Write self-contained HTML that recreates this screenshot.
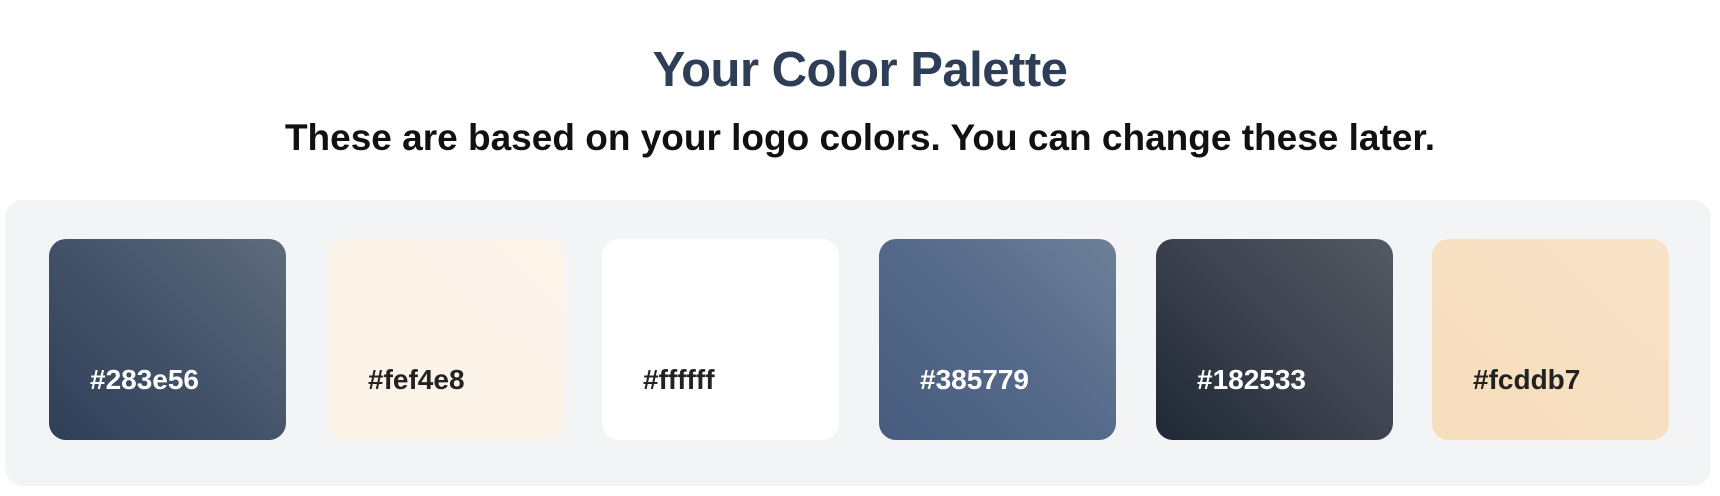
<!DOCTYPE html>
<html><head><meta charset="utf-8"><style>
html,body{margin:0;padding:0;background:#fff;width:1720px;height:496px;overflow:hidden;font-family:"Liberation Sans",sans-serif}
h1{position:absolute;left:0;width:1720px;top:41px;margin:0;text-align:center;font-size:49px;font-weight:bold;color:#2d3e56;line-height:58px;letter-spacing:-0.5px}
h2{position:absolute;left:0;width:1720px;top:115px;margin:0;text-align:center;font-size:37px;font-weight:bold;color:#111;line-height:46px}
.panel{position:absolute;left:5px;top:200px;width:1706px;height:286px;background:#f3f4f6;border-radius:18px}
.sw{position:absolute;top:239px;width:237px;height:201px;border-radius:17px}
.sw span{position:absolute;left:41px;top:124px;font-size:28px;line-height:34px;font-weight:bold}
</style></head><body>
<h1>Your Color Palette</h1>
<h2>These are based on your logo colors. You can change these later.</h2>
<div class="panel"></div>
<div class="sw" style="left:49px;background:linear-gradient(225deg,#5f6b7c,#44536a 50%,#2f3f57)"><span style="color:#fff">#283e56</span></div>
<div class="sw" style="left:327px;background:linear-gradient(225deg,#fdf5ea,#fbf2e8)"><span style="color:#222">#fef4e8</span></div>
<div class="sw" style="left:602px;background:#fff"><span style="color:#222">#ffffff</span></div>
<div class="sw" style="left:879px;background:linear-gradient(225deg,#6e7f98,#55698a 50%,#475c7e)"><span style="color:#fff">#385779</span></div>
<div class="sw" style="left:1156px;background:linear-gradient(225deg,#535a63,#3c424e 50%,#1f2835)"><span style="color:#fff">#182533</span></div>
<div class="sw" style="left:1432px;background:linear-gradient(225deg,#f8e2c8,#f6ddbc)"><span style="color:#222">#fcddb7</span></div>
</body></html>
